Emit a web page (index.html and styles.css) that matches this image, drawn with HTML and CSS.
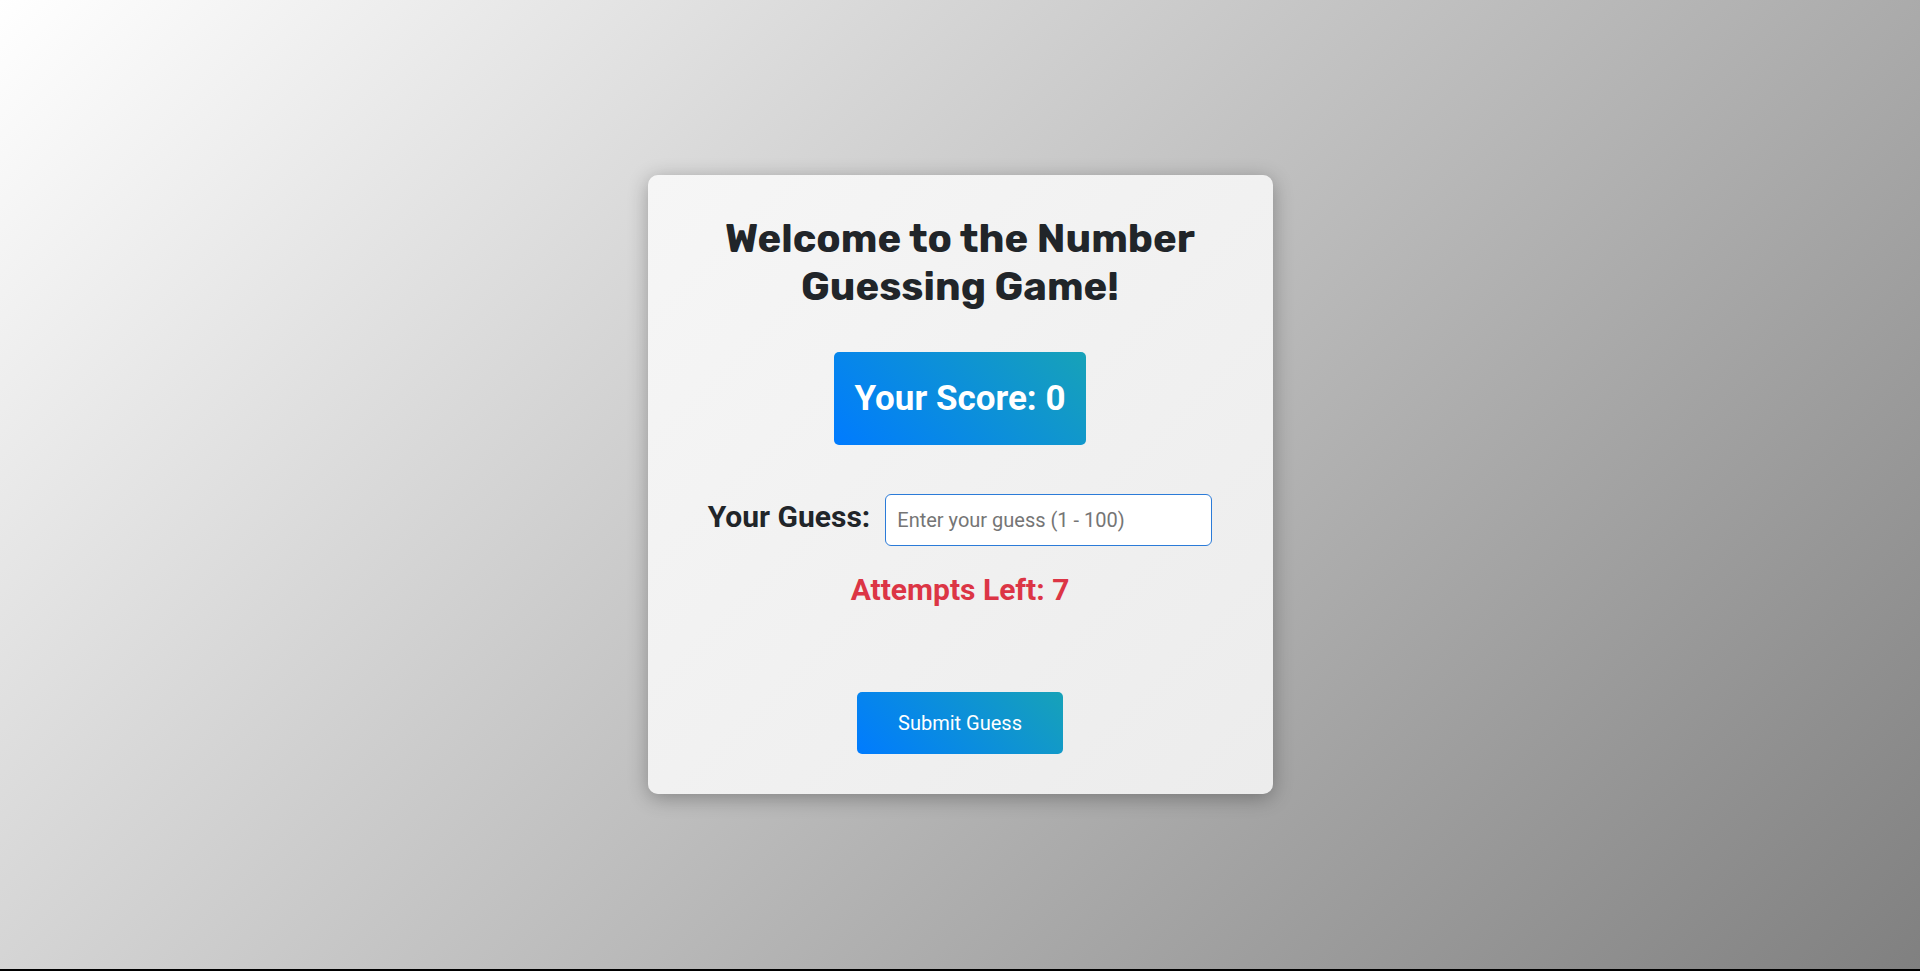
FILE: index.html
```html
<!DOCTYPE html>
<html lang="en">
<head>
  <meta charset="UTF-8" />
  <meta name="viewport" content="width=device-width, initial-scale=1.0"/>
  <title>Number Guessing Game</title>
  <link rel="stylesheet" href="styles.css">
</head>
<body>

  <div class="game-card">
    <h1>Welcome to the Number Guessing Game!</h1>

    <div class="score-box">Your Score: <span id="score">0</span></div>

    <div class="guess-row">
      <label for="guessInput">Your Guess:</label>
      <input type="number" id="guessInput" placeholder="Enter your guess (1 - 100)" min="1" max="100" />
    </div>

    <p class="attempts">Attempts Left: <span id="attempts">7</span></p>
    <p class="message" id="message"></p>

    <button class="submit-btn" id="submitBtn">Submit Guess</button>
  </div>

</body>
</html>
```

FILE: styles.css
```css
html {
  background: #000;
}

body {
  margin: 0;
  font-family: Roboto, Arial, sans-serif;
  background: linear-gradient(135deg, #ffffff, #808080);
  min-height: calc(100vh - 2px);
  display: flex;
  justify-content: center;
  align-items: center;
  color: #212529;
}

.game-card {
  background: linear-gradient(135deg, #f6f6f6, #ececec);
  width: 545px;
  padding: 40px;
  border-radius: 10px;
  text-align: center;
  box-shadow: 0 4px 20px rgba(0, 0, 0, 0.3);
}

h1 {
  font-family: Rubik, Inter, sans-serif;
  font-size: 40px;
  line-height: 48px;
  font-weight: 700;
  margin: 0 0 41px;
  color: #212529;
}

.score-box {
  display: inline-block;
  padding: 26px 20px;
  font-size: 35px;
  font-weight: bold;
  color: white;
  border-radius: 5px;
  background: linear-gradient(45deg, #007bff, #17a2b8);
}

.guess-row {
  margin-top: 49px;
  display: flex;
  justify-content: center;
  align-items: baseline;
  gap: 15px;
}

.guess-row label {
  font-size: 30px;
  font-weight: bold;
}

#guessInput {
  width: 303px;
  padding: 13px 11px;
  font-family: Roboto, Arial, sans-serif;
  font-size: 20px;
  border: 1px solid #2b7bd8;
  border-radius: 6px;
  background: white;
  outline: none;
}

#guessInput::placeholder {
  color: #757575;
}

.attempts {
  margin: 26px 0 0;
  font-size: 30px;
  font-weight: bold;
  color: #dc3545;
}

.message {
  margin: 0;
  height: 85px;
}

.submit-btn {
  padding: 19px 41px;
  font-family: Roboto, Arial, sans-serif;
  font-size: 20px;
  color: white;
  border: none;
  border-radius: 5px;
  background: linear-gradient(45deg, #007bff, #17a2b8);
  cursor: pointer;
}
```
